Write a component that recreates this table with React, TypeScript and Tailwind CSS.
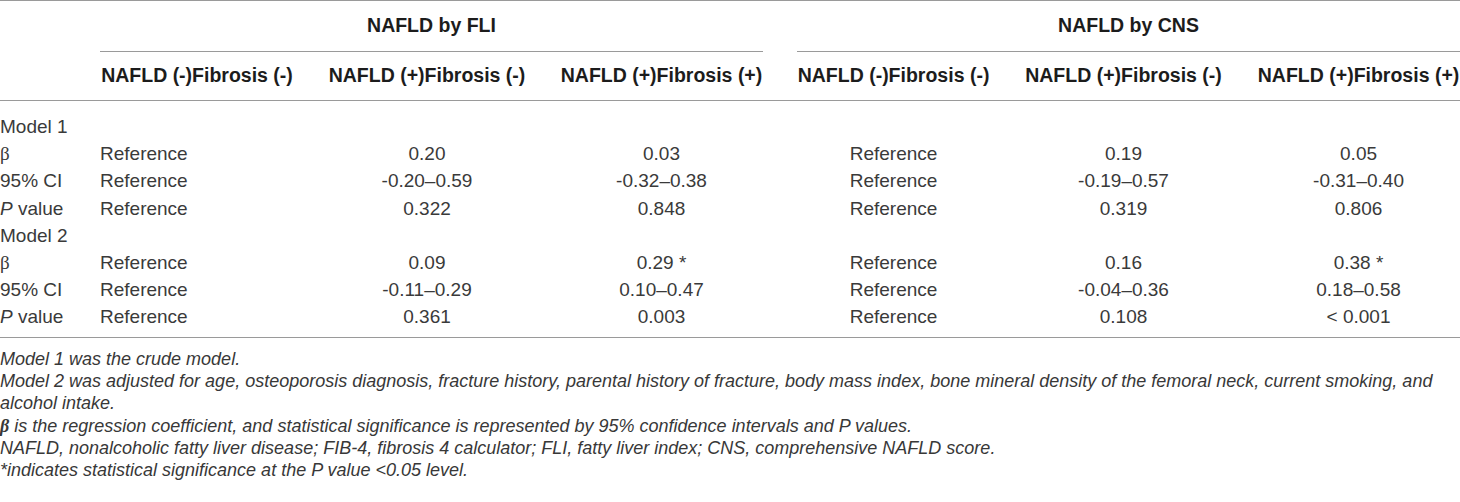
import React from 'react';

type Row = { label: React.ReactNode; cells?: string[] };

const Beta = () => <span className="font-['Liberation_Serif',serif]">β</span>;

const PValue = () => (
  <span>
    <i>P</i> value
  </span>
);

const rows: Row[] = [
  { label: 'Model 1' },
  { label: <Beta />, cells: ['Reference', '0.20', '0.03', 'Reference', '0.19', '0.05'] },
  { label: '95% CI', cells: ['Reference', '-0.20–0.59', '-0.32–0.38', 'Reference', '-0.19–0.57', '-0.31–0.40'] },
  { label: <PValue />, cells: ['Reference', '0.322', '0.848', 'Reference', '0.319', '0.806'] },
  { label: 'Model 2' },
  { label: <Beta />, cells: ['Reference', '0.09', '0.29 *', 'Reference', '0.16', '0.38 *'] },
  { label: '95% CI', cells: ['Reference', '-0.11–0.29', '0.10–0.47', 'Reference', '-0.04–0.36', '0.18–0.58'] },
  { label: <PValue />, cells: ['Reference', '0.361', '0.003', 'Reference', '0.108', '< 0.001'] },
];

const subHeads = [
  'NAFLD (-)Fibrosis (-)',
  'NAFLD (+)Fibrosis (-)',
  'NAFLD (+)Fibrosis (+)',
  'NAFLD (-)Fibrosis (-)',
  'NAFLD (+)Fibrosis (-)',
  'NAFLD (+)Fibrosis (+)',
];

const notes: React.ReactNode[] = [
  'Model 1 was the crude model.',
  'Model 2 was adjusted for age, osteoporosis diagnosis, fracture history, parental history of fracture, body mass index, bone mineral density of the femoral neck, current smoking, and alcohol intake.',
  <>
    <span className="font-['Liberation_Serif',serif] font-bold">β</span> is the regression coefficient, and
    statistical significance is represented by 95% confidence intervals and P values.
  </>,
  'NAFLD, nonalcoholic fatty liver disease; FIB-4, fibrosis 4 calculator; FLI, fatty liver index; CNS, comprehensive NAFLD score.',
  '*indicates statistical significance at the P value <0.05 level.',
];

export default function App() {
  return (
    <div className="w-[1460px] h-[502px] bg-white font-['Liberation_Sans',Arial,sans-serif] text-[#3a3a3a]">
      <table className="w-full table-fixed border-collapse border-t border-[#9a9a9a]">
        <colgroup>
          <col className="w-[83px]" />
          <col className="w-[228px]" />
          <col className="w-[232px]" />
          <col className="w-[237px]" />
          <col className="w-[227px]" />
          <col className="w-[233px]" />
          <col className="w-[220px]" />
        </colgroup>
        <thead className="text-[19.5px] font-bold text-[#1c1c1c]">
          <tr>
            <th className="p-0" />
            <th colSpan={3} className="p-0 px-[17px]">
              <div className="h-[51px] flex items-center justify-center border-b border-[#9a9a9a]">
                NAFLD by FLI
              </div>
            </th>
            <th colSpan={3} className="p-0 pl-[17px]">
              <div className="h-[51px] flex items-center justify-center border-b border-[#9a9a9a]">
                NAFLD by CNS
              </div>
            </th>
          </tr>
          <tr className="border-b border-[#9a9a9a]">
            <th className="p-0" />
            {subHeads.map((h, i) => (
              <th
                key={i}
                className={`h-[48px] p-0 whitespace-nowrap text-center ${i === 5 ? 'pl-[17px]' : 'px-[17px]'}`}
              >
                {h}
              </th>
            ))}
          </tr>
        </thead>
        <tbody className="text-[19px]">
          <tr className="h-[13px]">
            <td colSpan={7} className="p-0" />
          </tr>
          {rows.map((r, ri) => (
            <tr key={ri} className="h-[27.2px]">
              <td className="p-0 pr-[17px] whitespace-nowrap leading-[27px]">{r.label}</td>
              {r.cells
                ? r.cells.map((c, ci) => (
                    <td
                      key={ci}
                      className={`p-0 whitespace-nowrap leading-[27px] ${ci === 0 ? 'text-left' : 'text-center'} ${ci === 5 ? 'pl-[17px]' : 'px-[17px]'}`}
                    >
                      {c}
                    </td>
                  ))
                : <td colSpan={6} className="p-0" />}
            </tr>
          ))}
          <tr className="h-[7px] border-b border-[#9a9a9a]">
            <td colSpan={7} className="p-0" />
          </tr>
        </tbody>
      </table>
      <div className="pt-[10px] w-[1445px] italic text-[18px] leading-[22.2px] text-[#383838] font-['Liberation_Sans_Narrow','Liberation_Sans',Arial,sans-serif]">
        {notes.map((n, i) => (
          <p key={i}>{n}</p>
        ))}
      </div>
    </div>
  );
}
